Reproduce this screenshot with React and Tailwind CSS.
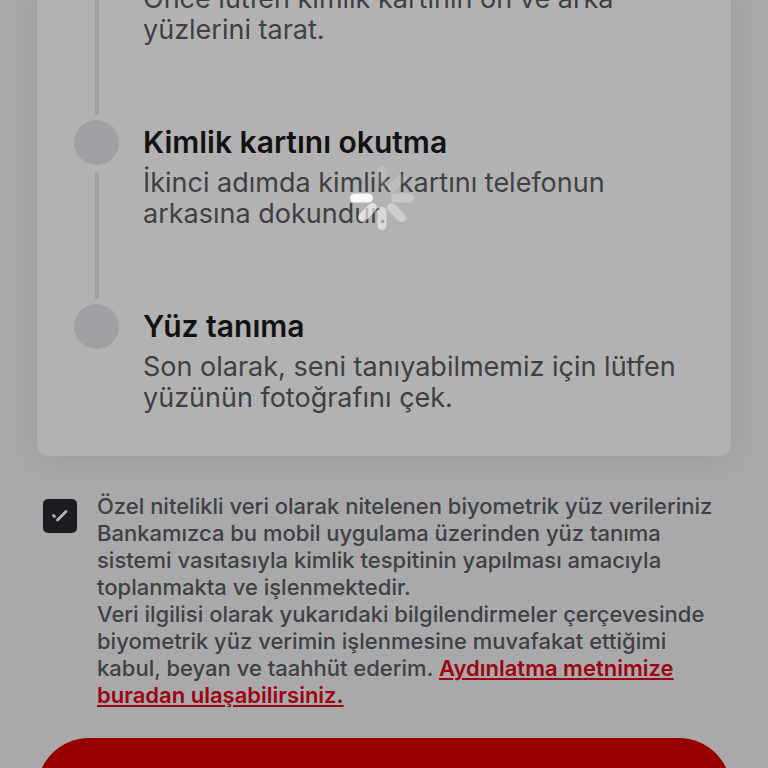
const steps = [
  {
    description: ['Önce lütfen kimlik kartının ön ve arka', 'yüzlerini tarat.'],
  },
  {
    title: 'Kimlik kartını okutma',
    description: ['İkinci adımda kimlik kartını telefonun', 'arkasına dokundur.'],
  },
  {
    title: 'Yüz tanıma',
    description: ['Son olarak, seni tanıyabilmemiz için lütfen', 'yüzünün fotoğrafını çek.'],
  },
];

const spokes = [
  { angle: 0, opacity: 0.14 },
  { angle: 45, opacity: 0.16 },
  { angle: 90, opacity: 0.26 },
  { angle: 135, opacity: 0.36 },
  { angle: 180, opacity: 0.5 },
  { angle: 225, opacity: 0.62 },
  { angle: 270, opacity: 0.92 },
];

function Spinner() {
  return (
    <svg className="w-16 h-16" viewBox="0 0 64 64" role="status" aria-label="Yükleniyor">
      {spokes.map(({ angle, opacity }) => (
        <rect
          key={angle}
          x="27.5"
          y="0"
          width="9"
          height="23"
          rx="4.5"
          fill="#fff"
          opacity={opacity}
          transform={`rotate(${angle} 32 32)`}
        />
      ))}
    </svg>
  );
}

function Step({ step, isLast }) {
  return (
    <li className="flex gap-6">
      {/* Marker and connector */}
      <div className="w-[45px] shrink-0 flex flex-col items-center">
        {step.title && <span className="w-[45px] h-[45px] mb-[7px] rounded-full bg-[#a0a0a4]"></span>}
        {!isLast && <span className="w-1 flex-1 mb-[5px] rounded-full bg-[#9f9fa0]"></span>}
      </div>

      <div className={isLast ? 'pb-[43px]' : 'pb-[75px]'}>
        {step.title && (
          <h2 className="mb-0.5 text-[30px] leading-[45px] font-semibold text-[#121214] whitespace-nowrap">
            {step.title}
          </h2>
        )}
        <p className="text-[27px] leading-[31px] text-[#404044] whitespace-nowrap">
          {step.description[0]}
          <br />
          {step.description[1]}
        </p>
      </div>
    </li>
  );
}

export default function App() {
  return (
    <main className="relative h-screen overflow-hidden bg-[#a9a9ab] px-[37px] font-['Inter',sans-serif]">
      {/* Steps */}
      <section className="-mt-[17px] rounded-xl bg-[#b2b2b2] px-[37px] shadow-[0_4px_32px_rgba(60,60,80,0.12)]">
        <ol>
          {steps.map((step, index) => (
            <Step key={step.description[0]} step={step} isLast={index === steps.length - 1} />
          ))}
        </ol>
      </section>

      {/* Consent */}
      <div className="mt-[37px] pl-1.5 flex items-start gap-5">
        <span className="relative mt-1.5 w-[34px] h-[34px] shrink-0">
          <input
            id="consent"
            type="checkbox"
            defaultChecked
            className="block w-full h-full appearance-none rounded-[5px] bg-[#1c1c21]"
          />
          <svg
            className="absolute inset-0 w-full h-full pointer-events-none"
            viewBox="0 0 34 34"
            fill="none"
            stroke="#b4b4b6"
            strokeWidth="2.8"
            strokeLinecap="round"
          >
            <path d="M10.5 16.5l1 1" />
            <path d="M14.5 21l8.5-8.5" />
          </svg>
        </span>
        <label
          htmlFor="consent"
          className="text-[22px] leading-[27px] font-medium text-[#404045] whitespace-nowrap"
        >
          Özel nitelikli veri olarak nitelenen biyometrik yüz verileriniz
          <br />
          Bankamızca bu mobil uygulama üzerinden yüz tanıma
          <br />
          sistemi vasıtasıyla kimlik tespitinin yapılması amacıyla
          <br />
          toplanmakta ve işlenmektedir.
          <br />
          Veri ilgilisi olarak yukarıdaki bilgilendirmeler çerçevesinde
          <br />
          biyometrik yüz verimin işlenmesine muvafakat ettiğimi
          <br />
          kabul, beyan ve taahhüt ederim.{' '}
          <a href="#aydinlatma" className="font-semibold text-[#9c0410] underline decoration-2 underline-offset-2">
            Aydınlatma metnimize
            <br />
            buradan ulaşabilirsiniz.
          </a>
        </label>
      </div>

      <button type="button" aria-label="Devam" className="mt-[29px] block w-full h-[104px] rounded-full bg-[#970001]"></button>

      {/* Loading overlay */}
      <div className="absolute inset-x-0 top-[166px] pr-1 flex justify-center">
        <Spinner />
      </div>
    </main>
  );
}
